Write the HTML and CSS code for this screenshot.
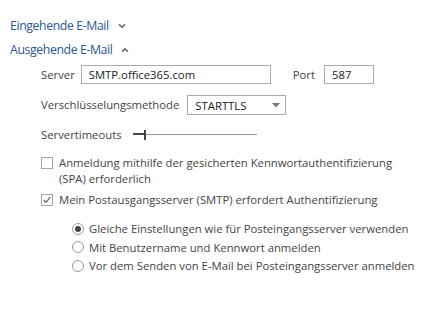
FILE: index.html
```html
<!DOCTYPE html>
<html lang="de">
<head>
  <meta charset="UTF-8" />
  <title>Kontoeinstellungen</title>
  <link rel="stylesheet" href="styles.css">
</head>
<body>

  <div class="panel">
    <div class="group-head">
      <span>Eingehende E-Mail</span>
      <svg class="chev" width="8" height="6" viewBox="0 0 8 6"><path d="M1 1.2 L4 4.2 L7 1.2" fill="none" stroke="#666" stroke-width="1.6"/></svg>
    </div>

    <div class="group-head open">
      <span>Ausgehende E-Mail</span>
      <svg class="chev" width="8" height="6" viewBox="0 0 8 6"><path d="M1 4.8 L4 1.8 L7 4.8" fill="none" stroke="#666" stroke-width="1.6"/></svg>
    </div>

    <div class="settings">
      <div class="row server-row">
        <label class="lbl">Server</label>
        <div class="field server">SMTP.office365.com</div>
        <label class="lbl port-lbl">Port</label>
        <div class="field port">587</div>
      </div>

      <div class="row enc-row">
        <label class="lbl">Verschlüsselungsmethode</label>
        <div class="field select">
          <span>STARTTLS</span>
          <svg width="8" height="5" viewBox="0 0 8 5"><path d="M0 0 H8 L4 4.5 Z" fill="#777"/></svg>
        </div>
      </div>

      <div class="row timeout-row">
        <label class="lbl">Servertimeouts</label>
        <div class="slider">
          <div class="slider-fill"></div>
          <div class="slider-thumb"></div>
        </div>
      </div>

      <div class="check spa">
        <span class="box"></span>
        <span class="check-text">Anmeldung mithilfe der gesicherten Kennwortauthentifizierung<br>(SPA) erforderlich</span>
      </div>

      <div class="check auth">
        <span class="box">
          <svg width="10" height="10" viewBox="0 0 10 10"><path d="M1.8 5 L4 7.3 L8.3 2" fill="none" stroke="#555" stroke-width="1.1"/></svg>
        </span>
        <span class="check-text">Mein Postausgangsserver (SMTP) erfordert Authentifizierung</span>
      </div>

      <div class="radios">
        <div class="radio checked"><span class="dot"></span>Gleiche Einstellungen wie für Posteingangsserver verwenden</div>
        <div class="radio"><span class="dot"></span>Mit Benutzername und Kennwort anmelden</div>
        <div class="radio"><span class="dot"></span>Vor dem Senden von E-Mail bei Posteingangsserver anmelden</div>
      </div>
    </div>
  </div>

</body>
</html>
```

FILE: styles.css
```css
* { box-sizing: border-box; }
body {
  margin: 0;
  background: #fff;
  font-family: 'Open Sans', 'Noto Sans', sans-serif;
  font-size: 11.3px;
  color: #444;
}
.panel {
  padding: 16px 0 0 10px;
}

/* section headers */
.group-head {
  display: flex;
  align-items: center;
  gap: 9px;
  height: 19px;
  font-size: 12.3px;
  letter-spacing: -0.4px;
  color: #2b5797;
}
.group-head + .group-head {
  margin-top: 5px;
}

/* settings */
.settings {
  padding-left: 31px;
  padding-top: 6px;
}
.row {
  display: flex;
  align-items: center;
}
.lbl {
  color: #444;
  line-height: 16px;
}
.field {
  height: 19px;
  border: 1px solid #ababab;
  background: #fff;
  color: #222;
  display: flex;
  align-items: center;
  padding-left: 7px;
}
.server-row .server {
  width: 190px;
  margin-left: 6px;
}
.port-lbl {
  margin-left: 22px;
}
.port {
  width: 50px;
  margin-left: 9px;
}
.enc-row {
  margin-top: 11px;
}
.select {
  width: 99px;
  height: 20px;
  margin-left: 8px;
  justify-content: space-between;
  padding-right: 5px;
}
.timeout-row {
  margin-top: 12px;
}
.slider {
  position: relative;
  width: 124px;
  height: 1px;
  background: #9a9a9a;
  margin-left: 11px;
  margin-top: -2px;
}
.slider-fill {
  width: 12px;
  height: 2px;
  margin-top: -1px;
  background: #444;
}
.slider-thumb {
  position: absolute;
  left: 11px;
  top: -4px;
  width: 2px;
  height: 10px;
  background: #444;
}

/* checkboxes */
.check {
  display: flex;
  align-items: flex-start;
  line-height: 16px;
}
.check .box {
  flex: none;
  width: 12px;
  height: 12px;
  border: 1px solid #a6a6a6;
  margin-top: 2px;
  margin-right: 6px;
  display: flex;
  align-items: center;
  justify-content: center;
}
.spa {
  margin-top: 12px;
}
.auth {
  margin-top: 5px;
}

/* radios */
.radios {
  padding-left: 31px;
  padding-top: 12px;
  display: flex;
  flex-direction: column;
  gap: 1.5px;
}
.radio {
  display: flex;
  align-items: center;
  height: 17px;
}
.radio .dot {
  flex: none;
  width: 12px;
  height: 12px;
  border: 1px solid #999;
  border-radius: 50%;
  margin-right: 5px;
  display: flex;
  align-items: center;
  justify-content: center;
}
.radio.checked .dot::after {
  content: "";
  width: 6px;
  height: 6px;
  border-radius: 50%;
  background: #444;
}
```
